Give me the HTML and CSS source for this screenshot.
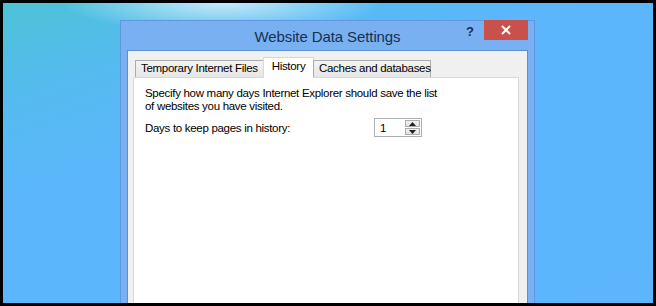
FILE: index.html
```html
<!DOCTYPE html>
<html>
<head>
<meta charset="utf-8">
<link rel="stylesheet" href="styles.css">
</head>
<body>
<div class="screen">
  <div class="window">
    <div class="titlebar">
      <div class="title">Website Data Settings</div>
      <div class="help">?</div>
      <div class="close">
        <svg width="10" height="10" viewBox="0 0 10 10"><path d="M1 1L9 9M9 1L1 9" stroke="#fff" stroke-width="2"/></svg>
      </div>
    </div>
    <div class="client">
      <div class="tabs">
        <div class="tab t1">Temporary Internet Files</div>
        <div class="tab active">History</div>
        <div class="tab t3">Caches and databases</div>
      </div>
      <div class="panel">
        <p class="desc">Specify how many days Internet Explorer should save the list<br>of websites you have visited.</p>
        <div class="row">
          <span class="label">Days to keep pages in history:</span>
          <div class="spinner">
            <span class="value">1</span>
            <div class="spins">
              <div class="spin up"><svg width="7" height="4" viewBox="0 0 7 4"><path d="M0 4L3.5 0L7 4Z" fill="#222"/></svg></div>
              <div class="spin down"><svg width="7" height="4" viewBox="0 0 7 4"><path d="M0 0L3.5 4L7 0Z" fill="#222"/></svg></div>
            </div>
          </div>
        </div>
      </div>
    </div>
  </div>
</div>
</body>
</html>
```

FILE: styles.css
```css
html, body {
  margin: 0;
  padding: 0;
  background: #000;
  width: 656px;
  height: 306px;
  overflow: hidden;
}
.screen {
  position: relative;
  margin: 3px 3px 0 3px;
  height: 300px;
  overflow: hidden;
  background:
    radial-gradient(ellipse 160px 30px at 220px 0px, rgba(235,250,255,0.75), rgba(235,250,255,0) 100%),
    linear-gradient(160deg, #4cc3d6 0%, #55bbef 18%, #5cb6fc 40%, #5db6fd 100%);
  font-family: "Liberation Sans", Arial, sans-serif;
}
.window {
  position: absolute;
  left: 117px;
  top: 17px;
  width: 413px;
  height: 300px;
  background: #79b0f2;
  border: 1px solid #5f98e0;
  display: flex;
  flex-direction: column;
}
.titlebar {
  height: 29px;
  position: relative;
  display: flex;
  align-items: center;
  justify-content: center;
}
.title {
  font-family: "Liberation Sans", Arial, sans-serif;
  font-size: 15px;
  color: #17304f;
  margin-top: 2px;
  letter-spacing: -0.1px;
}
.help {
  position: absolute;
  right: 60px;
  top: 3px;
  font-size: 13px;
  font-weight: bold;
  color: #1a2f55;
}
.close {
  position: absolute;
  right: 6px;
  top: -1px;
  width: 44px;
  height: 20px;
  background: #c9504b;
  display: flex;
  align-items: center;
  justify-content: center;
}
.client {
  flex: 1;
  margin: 0 6px 0 6px;
  background: #f0f0f0;
  border: 1px solid #5c8fcf;
  border-bottom: none;
  display: flex;
  flex-direction: column;
  padding-top: 6px;
  font-size: 11.5px;
  letter-spacing: -0.3px;
}
.tabs {
  display: flex;
  align-items: flex-end;
  padding-left: 7px;
  height: 20px;
  position: relative;
  z-index: 1;
}
.tab {
  color: #000;
  box-sizing: border-box;
  border: 1px solid #acacac;
  border-bottom: none;
  background: linear-gradient(#f3f3f3, #e6e6e6);
  height: 17px;
  line-height: 15px;
  padding: 0 5px;
  white-space: nowrap;
}
.t1 { width: 129px; }
.tab.active {
  background: #fff;
  border-color: #d9d9d9;
  height: 21px;
  width: 51px;
  margin-left: -1px;
  margin-bottom: -1px;
  line-height: 17px;
  text-align: center;
  padding: 0;
}
.t3 { width: 118px; margin-left: -1px; }
.panel {
  flex: 1;
  margin: 0 8px 0 5px;
  background: #fff;
  border: 1px solid #d9d9d9;
  padding: 9px 11px;
  color: #000;
}
.desc {
  margin: 0;
  line-height: 13px;
}
.row {
  display: flex;
  align-items: center;
  margin-top: 6px;
}
.label {
  width: 229px;
  flex: none;
}
.spinner {
  width: 48px;
  height: 19px;
  box-sizing: border-box;
  border: 1px solid #abadb3;
  display: flex;
  align-items: center;
  justify-content: space-between;
  background: #fff;
  margin-top: -1px;
}
.value {
  padding-left: 5px;
}
.spins {
  display: flex;
  flex-direction: column;
  gap: 1px;
  margin-right: 1px;
}
.spin {
  width: 15px;
  height: 7px;
  box-sizing: border-box;
  border: 1px solid #acacac;
  background: linear-gradient(#f2f2f2, #e2e2e2);
  display: flex;
  align-items: center;
  justify-content: center;
}
```
